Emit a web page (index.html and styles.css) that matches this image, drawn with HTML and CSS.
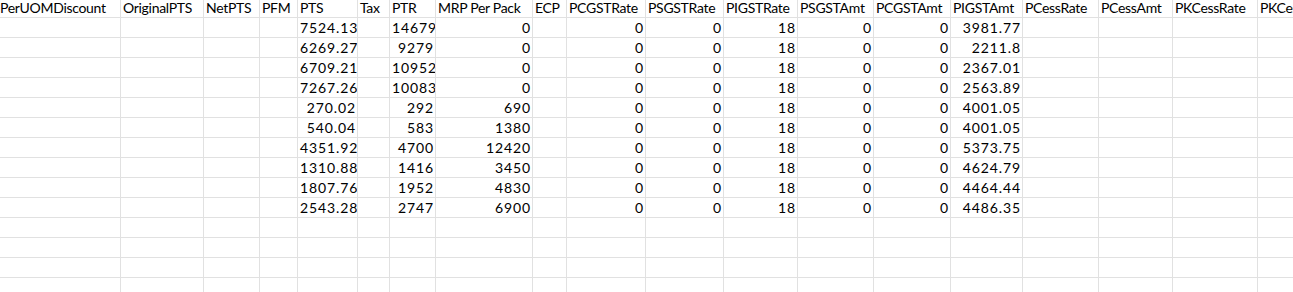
FILE: index.html
```html
<!DOCTYPE html>
<html>
<head>
<meta charset="utf-8">
<link rel="stylesheet" href="styles.css">
</head>
<body>
<div class="sheet">
  <div class="row head">
    <div class="first">PerUOMDiscount</div><div>OriginalPTS</div><div>NetPTS</div><div>PFM</div><div>PTS</div><div>Tax</div><div>PTR</div><div>MRP Per Pack</div><div>ECP</div><div>PCGSTRate</div><div>PSGSTRate</div><div>PIGSTRate</div><div>PSGSTAmt</div><div>PCGSTAmt</div><div>PIGSTAmt</div><div>PCessRate</div><div>PCessAmt</div><div>PKCessRate</div><div>PKCessAmt</div>
  </div>
  <div class="row"><div></div><div></div><div></div><div></div><div class="n">7524.13</div><div></div><div class="n">14679</div><div class="n">0</div><div></div><div class="n">0</div><div class="n">0</div><div class="n">18</div><div class="n">0</div><div class="n">0</div><div class="n">3981.77</div><div></div><div></div><div></div><div></div></div>
  <div class="row"><div></div><div></div><div></div><div></div><div class="n">6269.27</div><div></div><div class="n">9279</div><div class="n">0</div><div></div><div class="n">0</div><div class="n">0</div><div class="n">18</div><div class="n">0</div><div class="n">0</div><div class="n">2211.8</div><div></div><div></div><div></div><div></div></div>
  <div class="row"><div></div><div></div><div></div><div></div><div class="n">6709.21</div><div></div><div class="n">10952</div><div class="n">0</div><div></div><div class="n">0</div><div class="n">0</div><div class="n">18</div><div class="n">0</div><div class="n">0</div><div class="n">2367.01</div><div></div><div></div><div></div><div></div></div>
  <div class="row"><div></div><div></div><div></div><div></div><div class="n">7267.26</div><div></div><div class="n">10083</div><div class="n">0</div><div></div><div class="n">0</div><div class="n">0</div><div class="n">18</div><div class="n">0</div><div class="n">0</div><div class="n">2563.89</div><div></div><div></div><div></div><div></div></div>
  <div class="row"><div></div><div></div><div></div><div></div><div class="n">270.02</div><div></div><div class="n">292</div><div class="n">690</div><div></div><div class="n">0</div><div class="n">0</div><div class="n">18</div><div class="n">0</div><div class="n">0</div><div class="n">4001.05</div><div></div><div></div><div></div><div></div></div>
  <div class="row"><div></div><div></div><div></div><div></div><div class="n">540.04</div><div></div><div class="n">583</div><div class="n">1380</div><div></div><div class="n">0</div><div class="n">0</div><div class="n">18</div><div class="n">0</div><div class="n">0</div><div class="n">4001.05</div><div></div><div></div><div></div><div></div></div>
  <div class="row"><div></div><div></div><div></div><div></div><div class="n">4351.92</div><div></div><div class="n">4700</div><div class="n">12420</div><div></div><div class="n">0</div><div class="n">0</div><div class="n">18</div><div class="n">0</div><div class="n">0</div><div class="n">5373.75</div><div></div><div></div><div></div><div></div></div>
  <div class="row"><div></div><div></div><div></div><div></div><div class="n">1310.88</div><div></div><div class="n">1416</div><div class="n">3450</div><div></div><div class="n">0</div><div class="n">0</div><div class="n">18</div><div class="n">0</div><div class="n">0</div><div class="n">4624.79</div><div></div><div></div><div></div><div></div></div>
  <div class="row"><div></div><div></div><div></div><div></div><div class="n">1807.76</div><div></div><div class="n">1952</div><div class="n">4830</div><div></div><div class="n">0</div><div class="n">0</div><div class="n">18</div><div class="n">0</div><div class="n">0</div><div class="n">4464.44</div><div></div><div></div><div></div><div></div></div>
  <div class="row"><div></div><div></div><div></div><div></div><div class="n">2543.28</div><div></div><div class="n">2747</div><div class="n">6900</div><div></div><div class="n">0</div><div class="n">0</div><div class="n">18</div><div class="n">0</div><div class="n">0</div><div class="n">4486.35</div><div></div><div></div><div></div><div></div></div>
  <div class="row"><div></div><div></div><div></div><div></div><div></div><div></div><div></div><div></div><div></div><div></div><div></div><div></div><div></div><div></div><div></div><div></div><div></div><div></div><div></div></div>
  <div class="row"><div></div><div></div><div></div><div></div><div></div><div></div><div></div><div></div><div></div><div></div><div></div><div></div><div></div><div></div><div></div><div></div><div></div><div></div><div></div></div>
  <div class="row"><div></div><div></div><div></div><div></div><div></div><div></div><div></div><div></div><div></div><div></div><div></div><div></div><div></div><div></div><div></div><div></div><div></div><div></div><div></div></div>
  <div class="row"><div></div><div></div><div></div><div></div><div></div><div></div><div></div><div></div><div></div><div></div><div></div><div></div><div></div><div></div><div></div><div></div><div></div><div></div><div></div></div>
</div>
</body>
</html>
```
FILE: styles.css
```css
html, body {
  margin: 0;
  padding: 0;
  background: #ffffff;
  overflow: hidden;
}
body {
  width: 1293px;
  height: 292px;
}
.sheet {
  margin-top: -2px;
  font-family: Lato, "Liberation Sans", sans-serif;
  font-size: 14px;
  color: #000000;
  width: 1340px;
}
.row {
  display: grid;
  grid-template-columns: 121px 83px 56px 38px 60px 32px 46px 97px 34px 79px 78px 74px 76px 77px 72px 76px 74px 85px 80px;
  height: 20px;
}
.row > div {
  box-sizing: border-box;
  height: 20px;
  border-right: 1px solid #e1e1e1;
  border-bottom: 1px solid #e1e1e1;
  line-height: 19px;
  padding: 0 2px;
  white-space: nowrap;
  overflow: hidden;
  letter-spacing: -0.3px;
}
.row > div.first {
  text-indent: -2px;
  overflow: visible;
}
.row > div.n {
  text-align: right;
  letter-spacing: 0.9px;
  padding-right: 1px;
}
```
